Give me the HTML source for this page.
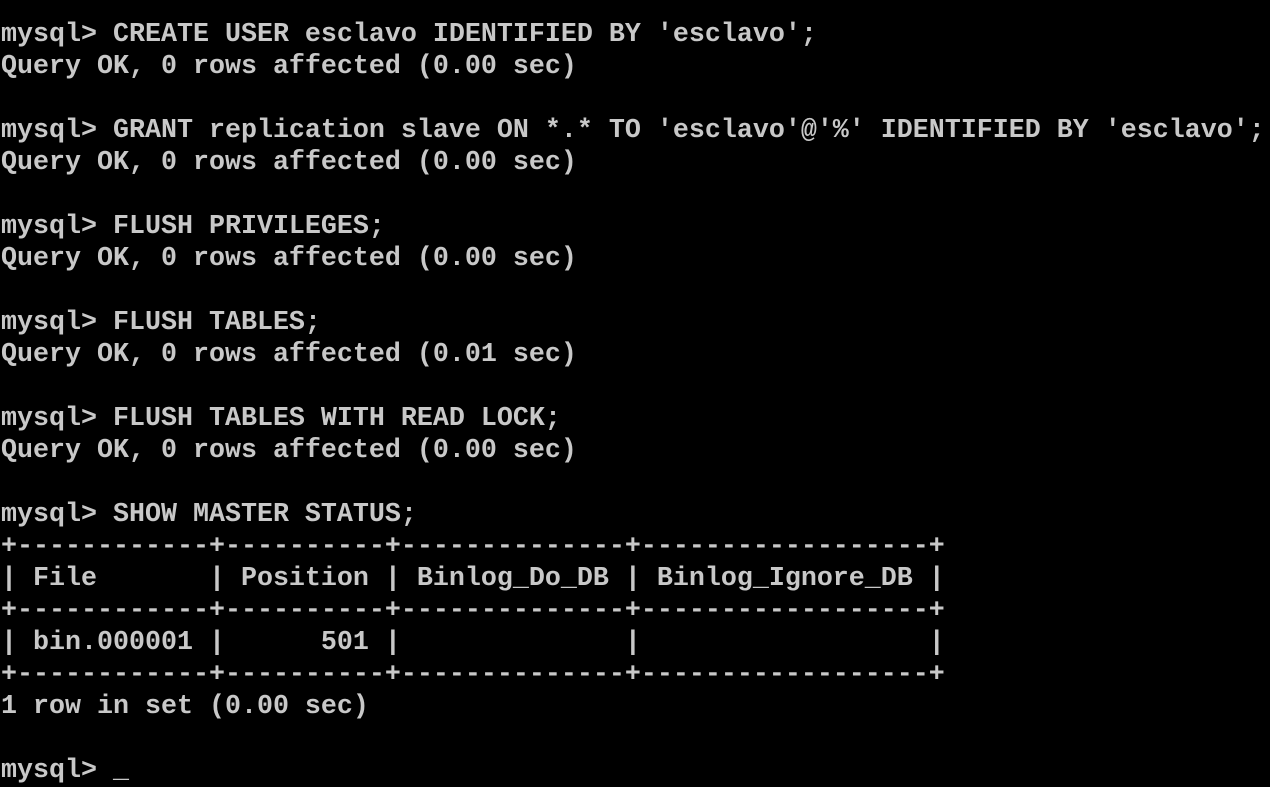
<!DOCTYPE html>
<html><head><meta charset="utf-8"><style>
html,body{margin:0;padding:0;background:#000;width:1270px;height:784px;overflow:hidden}
pre{margin:0;position:absolute;left:1px;top:19px;font-family:"Liberation Mono","DejaVu Sans Mono",monospace;font-size:26.67px;line-height:32px;color:#c8c8c8;font-weight:bold;letter-spacing:0}
</style></head><body><pre>mysql&gt; CREATE USER esclavo IDENTIFIED BY 'esclavo';
Query OK, 0 rows affected (0.00 sec)

mysql&gt; GRANT replication slave ON *.* TO 'esclavo'@'%' IDENTIFIED BY 'esclavo';
Query OK, 0 rows affected (0.00 sec)

mysql&gt; FLUSH PRIVILEGES;
Query OK, 0 rows affected (0.00 sec)

mysql&gt; FLUSH TABLES;
Query OK, 0 rows affected (0.01 sec)

mysql&gt; FLUSH TABLES WITH READ LOCK;
Query OK, 0 rows affected (0.00 sec)

mysql&gt; SHOW MASTER STATUS;
+------------+----------+--------------+------------------+
| File       | Position | Binlog_Do_DB | Binlog_Ignore_DB |
+------------+----------+--------------+------------------+
| bin.000001 |      501 |              |                  |
+------------+----------+--------------+------------------+
1 row in set (0.00 sec)

mysql&gt; _</pre></body></html>
